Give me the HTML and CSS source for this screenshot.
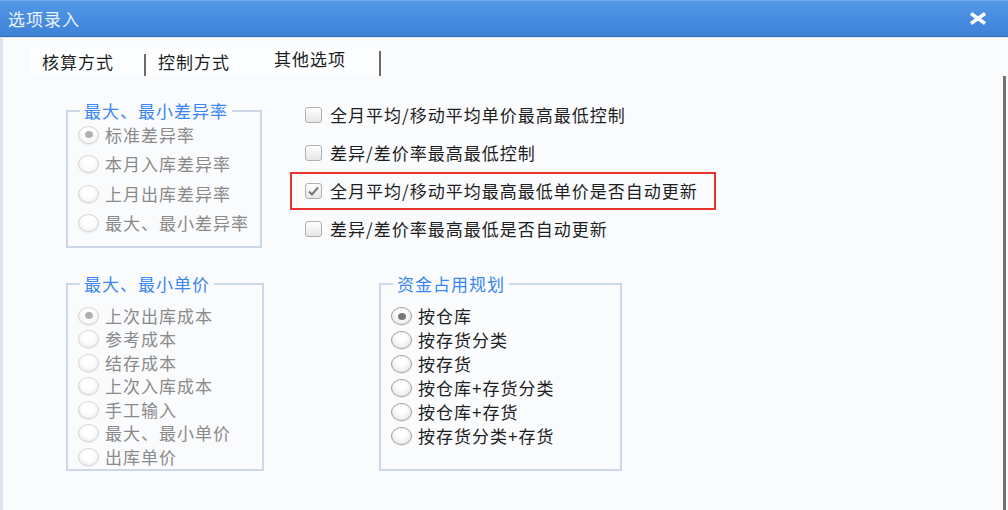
FILE: index.html
```html
<!DOCTYPE html>
<html lang="zh-CN">

<head>
    <meta charset="utf-8" />
    <meta name="viewport" content="width=device-width, initial-scale=1.0" />
    <title>选项录入</title>
    <link rel="stylesheet" href="styles.css">
</head>

<body>
    <div class="window">
        <div class="titlebar">
            <span class="title">选项录入</span>
            <svg class="close" width="18" height="13" viewBox="0 0 18 13">
                <path d="M2 1.5 L16 11.5 M16 1.5 L2 11.5" stroke="#ffffff" stroke-width="3.4" fill="none" />
            </svg>
        </div>

        <div class="body">
            <div class="tabs">
                <div class="tab">核算方式</div>
                <span class="tab-sep"></span>
                <div class="tab">控制方式</div>
                <div class="tab active">其他选项</div>
                <span class="tab-sep tall"></span>
            </div>

            <div class="panel">
                <!-- 差异率 (disabled) -->
                <fieldset class="group off g-diff">
                    <legend>最大、最小差异率</legend>
                    <ul class="options">
                        <li class="opt"><span class="radio on"></span>标准差异率</li>
                        <li class="opt"><span class="radio"></span>本月入库差异率</li>
                        <li class="opt"><span class="radio"></span>上月出库差异率</li>
                        <li class="opt"><span class="radio"></span>最大、最小差异率</li>
                    </ul>
                </fieldset>

                <div class="checks">
                    <div class="check-row"><span class="box"></span>全月平均/移动平均单价最高最低控制</div>
                    <div class="check-row"><span class="box"></span>差异/差价率最高最低控制</div>
                    <div class="check-row mark">
                        <span class="box">
                            <svg width="15" height="14" viewBox="0 0 15 14">
                                <path d="M3 7.5 L6 10.5 L12 3.5" stroke="#777777" stroke-width="2" fill="none" />
                            </svg>
                        </span>全月平均/移动平均最高最低单价是否自动更新
                    </div>
                    <div class="check-row"><span class="box"></span>差异/差价率最高最低是否自动更新</div>
                </div>

                <!-- 单价 (disabled) -->
                <fieldset class="group off g-price">
                    <legend>最大、最小单价</legend>
                    <ul class="options">
                        <li class="opt"><span class="radio on"></span>上次出库成本</li>
                        <li class="opt"><span class="radio"></span>参考成本</li>
                        <li class="opt"><span class="radio"></span>结存成本</li>
                        <li class="opt"><span class="radio"></span>上次入库成本</li>
                        <li class="opt"><span class="radio"></span>手工输入</li>
                        <li class="opt"><span class="radio"></span>最大、最小单价</li>
                        <li class="opt"><span class="radio"></span>出库单价</li>
                    </ul>
                </fieldset>

                <fieldset class="group g-fund">
                    <legend>资金占用规划</legend>
                    <ul class="options">
                        <li class="opt"><span class="radio on"></span>按仓库</li>
                        <li class="opt"><span class="radio"></span>按存货分类</li>
                        <li class="opt"><span class="radio"></span>按存货</li>
                        <li class="opt"><span class="radio"></span>按仓库+存货分类</li>
                        <li class="opt"><span class="radio"></span>按仓库+存货</li>
                        <li class="opt"><span class="radio"></span>按存货分类+存货</li>
                    </ul>
                </fieldset>
            </div>
        </div>
    </div>
</body>

</html>
```

FILE: styles.css
```css
* {
    box-sizing: border-box;
}

body {
    margin: 0;
    font-family: "Noto Sans CJK SC", "Noto Sans", sans-serif;
    font-size: 17px;
    letter-spacing: 1px;
    color: #1e1e1e;
}

.window {
    width: 1008px;
    height: 510px;
    display: flex;
    flex-direction: column;
    background-color: #fafbfd;
    overflow: hidden;
}

/* title bar */
.titlebar {
    height: 37px;
    flex-shrink: 0;
    display: flex;
    align-items: center;
    justify-content: space-between;
    padding: 0 21px 0 8px;
    background: linear-gradient(#5398e7, #478bdf 55%, #3d82d6);
    border-top: 1px solid #70aaec;
    border-bottom: 1px solid #2f6dbd;
    color: #e9f1fc;
    line-height: 18px;
}

.close {
    display: block;
}

.body {
    flex: 1;
    display: flex;
    flex-direction: column;
    border-left: 3px solid #dde3ec;
    border-top: 1px solid #dbe7f6;
}

/* tabs */
.tabs {
    display: flex;
    height: 28px;
    margin: 10px 0 0 27px;
}

.tab {
    display: flex;
    align-items: center;
    padding: 0 30px 0 12px;
    background-color: #fdfeff;
    line-height: 18px;
}

.tab.active {
    padding: 0 33px 6px 14px;
}

.tab-sep {
    width: 2px;
    height: 22px;
    align-self: flex-end;
    background-color: #6b6b6b;
}

.tab-sep.tall {
    height: 25px;
}

/* content panel */
.panel {
    flex: 1;
    display: grid;
    grid-template-columns: 198px 1fr;
    column-gap: 26px;
    row-gap: 27px;
    align-content: start;
    padding: 20px 0 0 63px;
    margin-right: 2px;
    border-right: 3px solid #737373;
}

.group {
    margin: 0;
    padding: 0 0 0 10px;
    min-width: 0;
    border: 2px solid #ccd8e8;
}

.group legend {
    margin-left: 2px;
    padding: 0 4px;
    line-height: 18px;
    color: #3b86f0;
}

.options {
    list-style: none;
    margin: 0;
    padding: 0;
}

.opt {
    display: flex;
    align-items: center;
    gap: 6px;
    line-height: 18px;
}

.g-diff {
    width: 196px;
    margin-top: 6px;
    padding-bottom: 2px;
}

.g-diff .opt {
    height: 29.5px;
}

.g-price .options,
.g-fund .options {
    margin-top: 11px;
}

.g-price .opt {
    height: 23.5px;
}

.g-fund {
    width: 243px;
    margin-left: 89px;
    padding-bottom: 14px;
}

.g-fund .opt {
    height: 24px;
}

/* radio buttons */
.radio {
    width: 21px;
    height: 18px;
    flex-shrink: 0;
    display: flex;
    align-items: center;
    justify-content: center;
    border-radius: 50%;
    border: 1px solid #a2a2a2;
    background: radial-gradient(circle at 50% 35%, #ffffff 30%, #dedede);
    box-shadow: 0 1px 1px rgba(0, 0, 0, 0.08);
}

.radio.on::after {
    content: "";
    width: 8px;
    height: 7px;
    border-radius: 50%;
    background-color: #777777;
}

.group.off .opt {
    color: #8a8a8a;
}

.group.off .radio {
    border-color: #d4d4d4;
    background: radial-gradient(circle at 50% 35%, #ffffff 35%, #ececec);
}

.group.off .radio.on::after {
    background-color: #b0b0b0;
}

/* checkboxes */
.checks {
    display: flex;
    flex-direction: column;
}

.check-row {
    width: 426px;
    height: 38px;
    display: flex;
    align-items: center;
    gap: 8px;
    padding-left: 13px;
    border: 2px solid transparent;
    line-height: 18px;
}

.check-row.mark {
    border-color: #e8332f;
}

.box {
    width: 17px;
    height: 16px;
    flex-shrink: 0;
    display: flex;
    align-items: center;
    justify-content: center;
    border: 1px solid #b0b0b0;
    border-radius: 3px;
    background: linear-gradient(#ffffff, #e6e6e6);
}
```
